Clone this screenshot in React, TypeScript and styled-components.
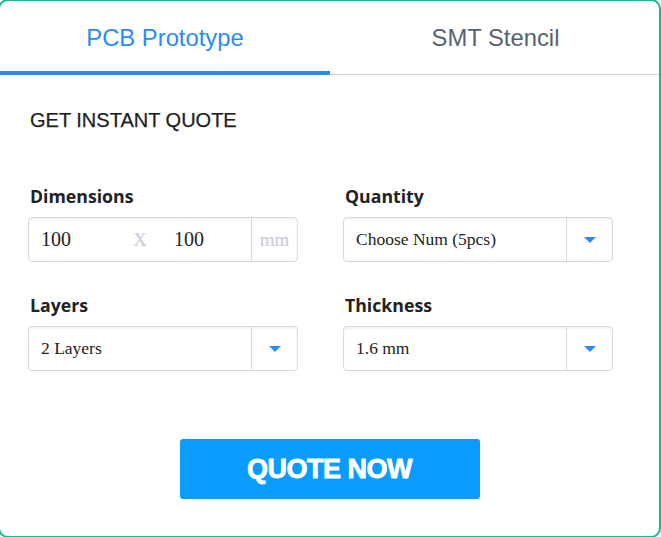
import React from "react";
import styled, { createGlobalStyle } from "styled-components";

const Global = createGlobalStyle`
  html, body { margin: 0; padding: 0; background: #fff; }
  body { font-family: "Liberation Sans", Arial, sans-serif; overflow: hidden; }
  * { box-sizing: border-box; }
`;

const Card = styled.div`
  margin: -1px 0 0 -2px;
  width: 663px;
  height: 539px;
  border: 2px solid #1db592;
  border-radius: 10px;
  background: #fff;
  overflow: hidden;
`;

const TabBar = styled.div`
  display: flex;
  border-bottom: 1px solid #cfd3d9;
  margin-right: -2px;
`;

const Tab = styled.div<{ $active?: boolean }>`
  flex: 0 0 ${(p) => (p.$active ? "330px" : "331px")};
  height: 74px;
  display: flex;
  align-items: center;
  justify-content: center;
  padding-top: 4px;
  font-family: "Liberation Sans", Arial, sans-serif;
  font-size: 23.8px;
  white-space: nowrap;
  color: ${(p) => (p.$active ? "#2a8cf2" : "#586270")};
  border-bottom: 4px solid ${(p) => (p.$active ? "#2a8cf2" : "transparent")};
  margin-bottom: -1px;
`;

const Body = styled.div`
  padding: 33px 48px 0 28px;
`;

const Heading = styled.h2`
  margin: 0 0 0 2px;
  font-family: "Liberation Sans", Arial, sans-serif;
  font-weight: 400;
  font-size: 20px;
  line-height: 24px;
  color: #1e1e1e;
  -webkit-text-stroke: 0.25px #1e1e1e;
`;

const FormGrid = styled.div`
  margin-top: 52px;
  display: grid;
  grid-template-columns: 270px 270px;
  column-gap: 45px;
  row-gap: 31px;
`;

const Field = styled.div`
  display: flex;
  flex-direction: column;
`;

const Label = styled.label`
  margin: 0 0 8px 2px;
  font-family: "Open Sans", sans-serif;
  font-weight: 700;
  font-size: 17.7px;
  line-height: 25px;
  color: #222;
`;

const Box = styled.div`
  height: 45px;
  display: flex;
  align-items: stretch;
  border: 1px solid #d9d9d9;
  border-radius: 4px;
  background: #fff;
  box-shadow: inset 0 2px 2px rgba(0, 0, 0, 0.05);
  font-family: "Liberation Serif", "Times New Roman", serif;
`;

const Value = styled.span<{ $size?: number }>`
  display: flex;
  align-items: center;
  font-size: ${(p) => p.$size ?? 17.5}px;
  color: #222;
`;

const FirstDim = styled(Value)`
  width: 104px;
  padding-left: 12px;
`;

const SecondDim = styled(Value)`
  flex: 1;
`;

const Cross = styled.span`
  width: 41px;
  display: flex;
  align-items: center;
  font-size: 19.5px;
  color: #c5ccd9;
`;

const Unit = styled.span`
  width: 46px;
  display: flex;
  align-items: center;
  justify-content: center;
  border-left: 1px solid #d9d9d9;
  font-size: 19px;
  color: #c5ccd9;
`;

const SelectText = styled(Value)`
  flex: 1;
  padding-left: 12px;
`;

const Arrow = styled.span`
  width: 46px;
  display: flex;
  align-items: center;
  justify-content: center;
  border-left: 1px solid #d9d9d9;
  &::after {
    content: "";
    width: 0;
    height: 0;
    border-left: 6.5px solid transparent;
    border-right: 6.5px solid transparent;
    border-top: 6px solid #2a8cf2;
    margin-top: 1px;
  }
`;

const ButtonRow = styled.div`
  display: flex;
  justify-content: center;
  padding-left: 20px;
  margin-top: 68px;
`;

const QuoteButton = styled.button`
  width: 300px;
  height: 60px;
  border: none;
  border-radius: 3px;
  background: #0a9bfe;
  color: #fff;
  font-family: "Liberation Sans", Arial, sans-serif;
  font-weight: 700;
  font-size: 27px;
  letter-spacing: -0.5px;
  -webkit-text-stroke: 0.8px #fff;
  padding-top: 2px;
  cursor: pointer;
`;

function Select({ value }: { value: string }) {
  return (
    <Box>
      <SelectText>{value}</SelectText>
      <Arrow />
    </Box>
  );
}

export default function App() {
  return (
    <>
      <Global />
      <Card>
        <TabBar>
          <Tab $active>PCB Prototype</Tab>
          <Tab>SMT Stencil</Tab>
        </TabBar>
        <Body>
          <Heading>GET INSTANT QUOTE</Heading>
          <FormGrid>
            <Field>
              <Label>Dimensions</Label>
              <Box>
                <FirstDim $size={20}>100</FirstDim>
                <Cross>X</Cross>
                <SecondDim $size={20}>100</SecondDim>
                <Unit>mm</Unit>
              </Box>
            </Field>
            <Field>
              <Label>Quantity</Label>
              <Select value="Choose Num (5pcs)" />
            </Field>
            <Field>
              <Label>Layers</Label>
              <Select value="2 Layers" />
            </Field>
            <Field>
              <Label>Thickness</Label>
              <Select value="1.6 mm" />
            </Field>
          </FormGrid>
          <ButtonRow>
            <QuoteButton>QUOTE NOW</QuoteButton>
          </ButtonRow>
        </Body>
      </Card>
    </>
  );
}
